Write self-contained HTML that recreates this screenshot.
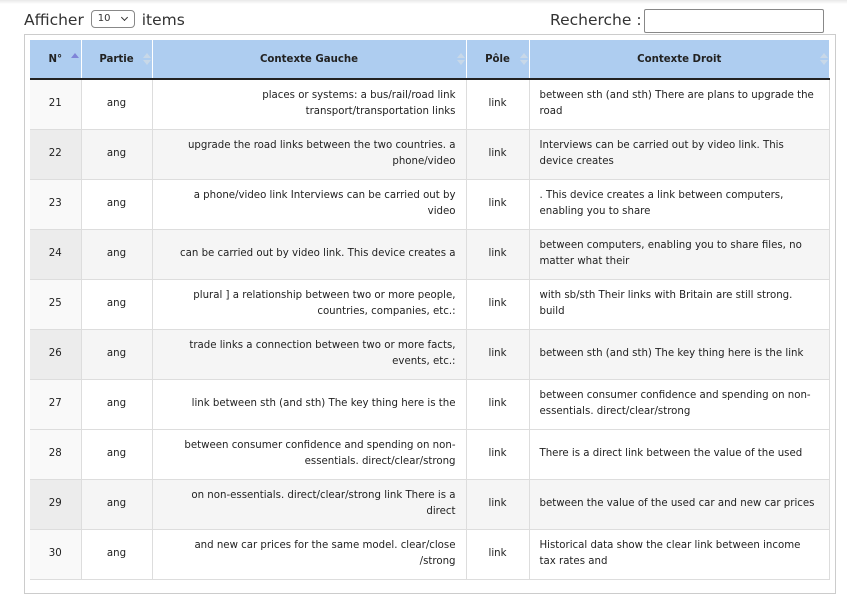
<!DOCTYPE html>
<html><head><meta charset="utf-8"><style>
body{margin:0;width:847px;height:581px;overflow:hidden;background:#fff;font-family:"DejaVu Sans","Liberation Sans",sans-serif;color:#222;position:relative}
.top{position:absolute;left:0;top:0;width:847px;height:4px;background:linear-gradient(#e8e8e8,#fff)}
.af{position:absolute;left:24px;top:11px;font-size:15.5px;color:#333}
.sel{display:inline-block;width:44px;height:18px;border:1px solid #888;border-radius:4px;font-size:10px;vertical-align:middle;position:relative;box-sizing:border-box;padding-left:6px;line-height:16px;margin:0 2px;top:-2px}
.sel:after{content:"";position:absolute;right:7px;top:4px;width:4px;height:4px;border-right:1.5px solid #333;border-bottom:1.5px solid #333;transform:rotate(45deg)}
.rc{position:absolute;left:550px;top:11px;font-size:15.5px;color:#333}
.inp{position:absolute;left:644px;top:9px;width:180px;height:24px;border:1px solid #888;border-radius:2px;box-sizing:border-box}
.box{position:absolute;left:24px;top:34px;width:812px;height:560px;border:1px solid #ccc;box-sizing:border-box}
table{position:absolute;left:30px;top:40px;border-collapse:collapse;font-size:10.2px;table-layout:fixed}
th{background:#aecdf0;height:38px;font-weight:bold;border-left:1px solid #fff;border-bottom:2px solid #222;position:relative;padding:0}
th:first-child{border-left:none}
th .s{position:absolute;right:5px;top:13px;width:0;height:0}
th .s:before{content:"";position:absolute;left:-4px;top:0;border:4px solid transparent;border-bottom:5px solid #c8d8e8;border-top:none}
th .s:after{content:"";position:absolute;left:-4px;top:7px;border:4px solid transparent;border-top:5px solid #c8d8e8;border-bottom:none}
th .up:before{border-bottom-color:#7f84d8}
th .up:after{display:none}
td{height:50px;border:1px solid #ddd;border-top:none;padding:0 10px;line-height:16px;box-sizing:border-box}
td:first-child{border-left:none}
tr.o td{background:#f5f5f5}
tr td:first-child{background:#f9f9f9;text-align:center}
tr.o td:first-child{background:#ececec}
.c{text-align:center}.r{text-align:right}
</style></head><body>
<div class="top"></div>
<div class="af">Afficher <span class="sel">10</span> items</div>
<div class="rc">Recherche :</div><div class="inp"></div>
<div class="box"></div>
<table>
<colgroup><col style="width:51px"><col style="width:71px"><col style="width:314px"><col style="width:63px"><col style="width:300px"></colgroup>
<tr><th>N° <span class="s up" style="right:6px"></span></th><th>Partie<span class="s"></span></th><th>Contexte Gauche<span class="s"></span></th><th>Pôle<span class="s"></span></th><th>Contexte Droit<span class="s"></span></th></tr>
<tr><td>21</td><td class="c">ang</td><td class="r">places or systems: a bus/rail/road link transport/transportation links</td><td class="c">link</td><td>between sth (and sth) There are plans to upgrade the road</td></tr>
<tr class="o"><td>22</td><td class="c">ang</td><td class="r">upgrade the road links between the two countries. a phone/video</td><td class="c">link</td><td>Interviews can be carried out by video link. This device creates</td></tr>
<tr><td>23</td><td class="c">ang</td><td class="r">a phone/video link Interviews can be carried out by<br>video</td><td class="c">link</td><td>. This device creates a link between computers, enabling you to share</td></tr>
<tr class="o"><td>24</td><td class="c">ang</td><td class="r">can be carried out by video link. This device creates a</td><td class="c">link</td><td>between computers, enabling you to share files, no matter what their</td></tr>
<tr><td>25</td><td class="c">ang</td><td class="r">plural ] a relationship between two or more people, countries, companies, etc.:</td><td class="c">link</td><td>with sb/sth Their links with Britain are still strong. build</td></tr>
<tr class="o"><td>26</td><td class="c">ang</td><td class="r">trade links a connection between two or more facts, events, etc.:</td><td class="c">link</td><td>between sth (and sth) The key thing here is the link</td></tr>
<tr><td>27</td><td class="c">ang</td><td class="r">link between sth (and sth) The key thing here is the</td><td class="c">link</td><td>between consumer confidence and spending on non-essentials. direct/clear/strong</td></tr>
<tr><td>28</td><td class="c">ang</td><td class="r">between consumer confidence and spending on non-essentials. direct/clear/strong</td><td class="c">link</td><td>There is a direct link between the value of the used</td></tr>
<tr class="o"><td>29</td><td class="c">ang</td><td class="r">on non-essentials. direct/clear/strong link There is a direct</td><td class="c">link</td><td>between the value of the used car and new car prices</td></tr>
<tr><td>30</td><td class="c">ang</td><td class="r">and new car prices for the same model. clear/close /strong</td><td class="c">link</td><td>Historical data show the clear link between income tax rates and</td></tr>
</table>
</body></html>
